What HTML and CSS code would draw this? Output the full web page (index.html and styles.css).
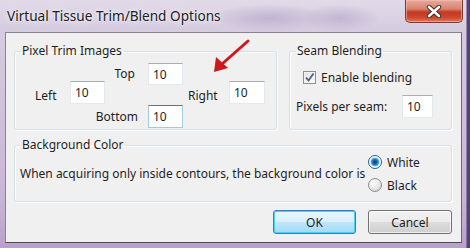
FILE: index.html
```html
<!DOCTYPE html>
<html>
<head>
<meta charset="utf-8">
<link rel="stylesheet" href="styles.css">
</head>
<body>
<div class="window">
  <div class="titlebar">
    <span class="title">Virtual Tissue Trim/Blend Options</span>
    <div class="close">
      <svg width="16" height="13" viewBox="0 0 16 13">
        <path d="M3 2 L13 11 M13 2 L3 11" stroke="#3b2a2a" stroke-width="4.4" stroke-linecap="round" fill="none"/>
        <path d="M3 2 L13 11 M13 2 L3 11" stroke="#ffffff" stroke-width="2.6" stroke-linecap="round" fill="none"/>
      </svg>
    </div>
  </div>
  <div class="client">
    <div class="top-row">
      <fieldset class="group trim">
        <legend>Pixel Trim Images</legend>
        <div class="trim-grid">
          <span class="lbl l-left">Left</span>
          <span class="field in-left">10</span>
          <span class="lbl l-top">Top</span>
          <span class="field in-top">10</span>
          <span class="lbl l-bottom">Bottom</span>
          <span class="field in-bottom focused">10</span>
          <span class="lbl l-right">Right</span>
          <span class="field in-right">10</span>
        </div>
      </fieldset>
      <fieldset class="group seam">
        <legend>Seam Blending</legend>
        <div class="check-row">
          <span class="checkbox">
            <svg width="11" height="11" viewBox="0 0 11 11"><path d="M2 5.5 L4.5 8.5 L9.5 1.5" stroke="#4a5f97" stroke-width="1.8" fill="none"/></svg>
          </span>
          <span>Enable blending</span>
        </div>
        <div class="pps-row">
          <span class="pps-label">Pixels per seam:</span>
          <span class="field in-pps">10</span>
        </div>
      </fieldset>
    </div>
    <fieldset class="group bg">
      <legend>Background Color</legend>
      <div class="bg-row">
        <span class="bg-text">When acquiring only inside contours, the background color is</span>
        <div class="radios">
          <div class="radio-row"><span class="radio on"></span><span>White</span></div>
          <div class="radio-row"><span class="radio"></span><span>Black</span></div>
        </div>
      </div>
    </fieldset>
    <div class="buttons">
      <span class="btn default">OK</span>
      <span class="btn">Cancel</span>
    </div>
  </div>
  <svg class="arrow" width="50" height="45" viewBox="0 0 50 45">
    <path d="M43 2 L17 25" stroke="#d0181b" stroke-width="3" stroke-linecap="round" fill="none"/>
    <path d="M9 33 L11 18 L23 29 Z" fill="#d0181b"/>
  </svg>
</div>
</body>
</html>
```
FILE: styles.css
```css
* { box-sizing: border-box; }
html, body { margin: 0; padding: 0; }
body {
  width: 470px;
  height: 248px;
  overflow: hidden;
  font-family: "Segoe UI", "Noto Sans", sans-serif;
  font-size: 12px;
  color: #1e1e1e;
}
.window {
  position: relative;
  width: 470px;
  height: 248px;
  display: flex;
  flex-direction: column;
  background:
    linear-gradient(to right, rgba(0,0,0,0) 466px, #54437a 467px),
    radial-gradient(ellipse 60px 14px at 270px 18px, rgba(170,155,195,0.55), rgba(170,155,195,0) 100%),
    radial-gradient(ellipse 40px 14px at 340px 18px, rgba(170,155,195,0.5), rgba(170,155,195,0) 100%),
    linear-gradient(to bottom, #e2dae8 0px, #d6cce0 30px, #c7b5d5 200px, #b9a0c9 248px);
}
.titlebar {
  height: 32px;
  display: flex;
  justify-content: space-between;
  align-items: flex-start;
  padding: 0 7px 0 7px;
}
.title {
  font-size: 13.6px;
  line-height: 18px;
  margin-top: 7px;
  color: #202020;
  text-shadow: 0 0 6px rgba(255,255,255,0.9), 0 0 2px rgba(255,255,255,0.8);
}
.close {
  width: 58px;
  height: 23px;
  border: 1px solid #7a3a33;
  border-top: none;
  border-radius: 0 0 5px 5px;
  background: linear-gradient(to bottom, #e6a99a 0%, #d98470 40%, #c3391f 55%, #cc4a2d 80%, #e07a5c 100%);
  box-shadow: inset 0 0 0 1px rgba(255,200,190,0.5);
  display: flex;
  align-items: center;
  justify-content: center;
}
.client {
  flex: 1;
  margin: 0 8px 5px 5px;
  background: #f0f0f0;
  border: 1px solid #8a8290;
  border-bottom-color: #4d4953;
  border-right-color: #6e6676;
  padding: 11px 9px 8px 8px;
  display: flex;
  flex-direction: column;
}
.group {
  margin: 0;
  border: 1px solid #d5dfe5;
  border-radius: 3px;
  box-shadow: 1px 1px 0 #ffffff, inset 1px 1px 0 #ffffff;
  padding: 0 6px;
  min-width: 0;
}
.group legend {
  padding: 0 1px;
  line-height: 14px;
  font-size: 12px;
}
.top-row {
  display: flex;
  gap: 12px;
  height: 86px;
}
.trim {
  width: 263px;
  padding-top: 4px;
}
.trim-grid {
  margin-left: 14px;
  display: grid;
  grid-template-columns: 35px 35px 43px 35px 46px 36px;
  grid-template-rows: 23px 23px;
  row-gap: 20px;
  align-items: center;
}
.field {
  display: block;
  height: 23px;
  background: #ffffff;
  border: 1px solid #e3e9ef;
  border-top-color: #abadb3;
  padding: 0 0 0 4px;
  line-height: 21px;
}
.field.focused {
  border-color: #a4c9e3;
  border-top-color: #3d7bad;
}
.l-left { grid-column: 1; grid-row: 1 / 3; }
.in-left { grid-column: 2; grid-row: 1 / 3; align-self: start; margin-top: 19px; }
.l-top { grid-column: 3; grid-row: 1; justify-self: end; margin-right: 13px; }
.in-top { grid-column: 4; grid-row: 1; height: 22px; }
.l-bottom { grid-column: 3; grid-row: 2; justify-self: end; margin-right: 10px; }
.in-bottom { grid-column: 4; grid-row: 2; }
.l-right { grid-column: 5; grid-row: 1 / 3; padding-left: 5px; }
.in-right { grid-column: 6; grid-row: 1 / 3; align-self: start; margin-top: 19px; }
.seam {
  flex: 1;
}
.check-row {
  display: flex;
  align-items: center;
  gap: 5px;
  margin: 12px 0 0 7px;
  height: 14px;
}
.checkbox {
  width: 13px;
  height: 13px;
  border: 1px solid #8e8f8f;
  background: linear-gradient(135deg, #dcdcdc, #f4f4f4 60%, #ffffff);
  box-shadow: inset 0 0 0 1px #f4f4f4;
  display: flex;
  align-items: center;
  justify-content: center;
}
.pps-row {
  display: flex;
  align-items: center;
  margin-top: 11px;
}
.pps-label { width: 106px; }
.in-pps { width: 31px; }
.bg {
  margin-top: 8px;
  height: 64px;
  padding-top: 2px;
}
.bg-row {
  display: flex;
  align-items: center;
  justify-content: space-between;
}
.bg-text { margin-left: -1px; }
.radios {
  width: 77px;
  display: flex;
  flex-direction: column;
  gap: 7px;
}
.radio-row {
  display: flex;
  align-items: center;
  gap: 5px;
  height: 16px;
}
.radio {
  width: 14px;
  height: 14px;
  border-radius: 50%;
  border: 1px solid #8e8f8f;
  background: radial-gradient(circle at 40% 35%, #ffffff, #e2e2e2 60%, #c8c8c8);
}
.radio.on {
  border-color: #2c628b;
  background: radial-gradient(circle at 50% 50%, #0f3f6e 0, #1f73b5 2.5px, #5bb0e6 4px, #dfeef8 4.6px, #ffffff 6px);
}
.buttons {
  margin-top: 8px;
  display: flex;
  justify-content: flex-end;
  gap: 12px;
}
.btn {
  width: 84px;
  height: 24px;
  border: 1px solid #707070;
  border-radius: 3px;
  background: linear-gradient(to bottom, #f2f2f2 0%, #ebebeb 50%, #dddddd 51%, #cfcfcf 100%);
  box-shadow: inset 0 0 0 1px rgba(255,255,255,0.7);
  display: flex;
  align-items: center;
  justify-content: center;
}
.btn.default {
  width: 83px;
  border-color: #3c7fb1;
  background: linear-gradient(to bottom, #eaf6fd 0%, #d9f0fc 50%, #bee6fd 51%, #a7d9f5 100%);
  box-shadow: inset 0 0 0 1px #48d0f8;
}
.arrow {
  position: absolute;
  left: 205px;
  top: 39px;
}
```
